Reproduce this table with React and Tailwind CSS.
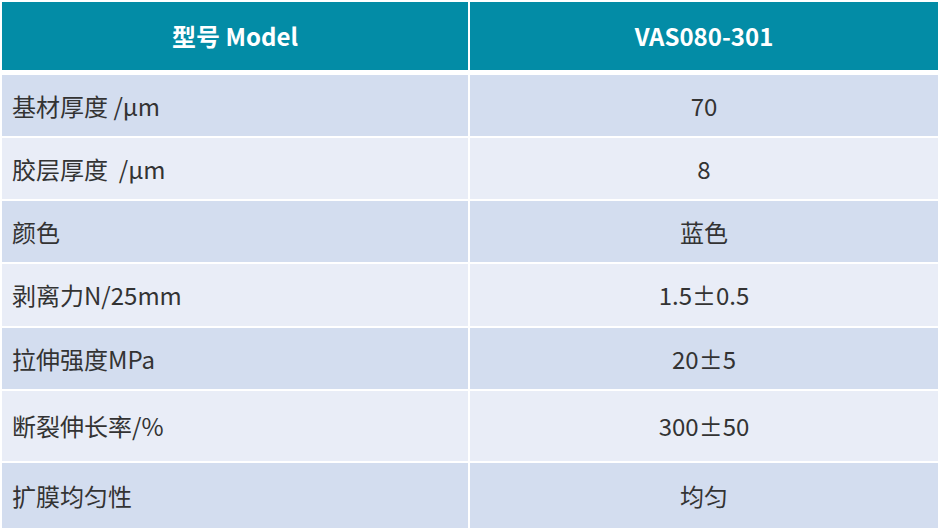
import React from "react";

const rows = [
  { name: "基材厚度 /μm", value: "70", h: "h-[61px]", dark: true },
  { name: "胶层厚度  /μm", value: "8", h: "h-[61px]", dark: false },
  { name: "颜色", value: "蓝色", h: "h-[61px]", dark: true },
  { name: "剥离力N/25mm", value: "1.5±0.5", h: "h-[62px]", dark: false },
  { name: "拉伸强度MPa", value: "20±5", h: "h-[61px]", dark: true },
  { name: "断裂伸长率/%", value: "300±50", h: "h-[70px]", dark: false },
  { name: "扩膜均匀性", value: "均匀", h: "h-[65px]", dark: true },
];

const App = () => {
  return (
    <div
      className="w-[938px] h-[528px] overflow-hidden bg-white pt-[2px] pl-[2px] text-[#333333]"
      style={{ fontFamily: '"Noto Sans CJK SC", "Noto Sans", sans-serif' }}
    >
      <div className="grid grid-cols-[466px_468px] gap-x-[2px] h-[68px] mb-[5px] text-white font-bold text-[24px]">
        <div className="bg-[#038ca6] flex items-center justify-center">型号 Model</div>
        <div className="bg-[#038ca6] flex items-center justify-center">VAS080-301</div>
      </div>
      <div className="flex flex-col gap-y-[2px]">
        {rows.map((row) => {
          const bg = row.dark ? "bg-[#d3ddef]" : "bg-[#e9edf7]";
          return (
            <div
              key={row.name}
              className={`grid grid-cols-[466px_468px] gap-x-[2px] text-[24px] ${row.h}`}
            >
              <div className={`${bg} flex items-center pl-[10px] whitespace-pre`}>{row.name}</div>
              <div className={`${bg} flex items-center justify-center`}>{row.value}</div>
            </div>
          );
        })}
      </div>
    </div>
  );
};

export default App;
